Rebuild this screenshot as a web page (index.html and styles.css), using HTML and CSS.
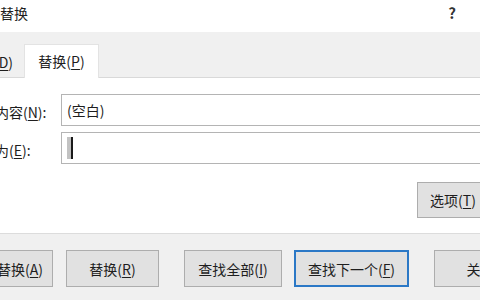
FILE: index.html
```html
<!DOCTYPE html>
<html lang="zh-CN">
<head>
  <meta charset="UTF-8">
  <title>查找和替换</title>
  <link rel="stylesheet" href="styles.css">
</head>
<body>
  <div class="dialog">
    <div class="titlebar">
      <span class="title">查找和替换</span>
      <span class="help">?</span>
    </div>

    <div class="tabs">
      <div class="tab">查找(<u>D</u>)</div>
      <div class="tab active">替换(<u>P</u>)</div>
    </div>

    <div class="content">
      <div class="row">
        <label class="label">查找内容(<u>N</u>):</label>
        <div class="input">(空白)</div>
      </div>
      <div class="row">
        <label class="label">替换为(<u>E</u>):</label>
        <div class="input"><span class="caret"></span></div>
      </div>
      <div class="options">
        <button class="btn btn-options">选项(<u>T</u>)</button>
      </div>
    </div>

    <div class="footer">
      <button class="btn b-all">全部替换(<u>A</u>)</button>
      <button class="btn b-one">替换(<u>R</u>)</button>
      <button class="btn b-findall">查找全部(<u>I</u>)</button>
      <button class="btn b-next">查找下一个(<u>F</u>)</button>
      <button class="btn b-close">关闭</button>
    </div>
  </div>
</body>
</html>
```

FILE: styles.css
```css
html, body {
  margin: 0;
  padding: 0;
  width: 480px;
  height: 300px;
  overflow: hidden;
  background: #ffffff;
}

body {
  font-family: "Noto Sans CJK SC", "Noto Sans", sans-serif;
  font-size: 14px;
  color: #1e1e1e;
}

u {
  text-decoration: underline;
  text-underline-offset: 2px;
}

/* the dialog is wider than the window, its left side is cut off */
.dialog {
  width: 600px;
  margin-left: -48px;
}

.titlebar {
  height: 32px;
  box-sizing: border-box;
  padding: 3px 96px 0 6px;
  display: flex;
  justify-content: space-between;
  align-items: flex-start;
  background: #ffffff;
  line-height: 20px;
}

.help {
  font-size: 15px;
  font-weight: bold;
  color: #333;
}

.tabs {
  height: 46px;
  box-sizing: border-box;
  padding-left: 3px;
  display: flex;
  align-items: flex-end;
  background: #f0f0f0;
  border-bottom: 1px solid #d9d9d9;
}

.tab {
  width: 69px;
  height: 32px;
  display: flex;
  align-items: center;
  justify-content: center;
  margin-bottom: -1px;
}

.tab.active {
  width: 75px;
  height: 34px;
  box-sizing: border-box;
  background: #ffffff;
  border: 1px solid #e3e3e3;
  border-bottom: none;
  padding-bottom: 2px;
}

.content {
  padding: 16px 63px 15px 15px;
  background: #ffffff;
}

.row {
  display: flex;
  align-items: center;
  margin-bottom: 6px;
}

.label {
  width: 94px;
  flex-shrink: 0;
  padding-top: 3px;
}

.input {
  flex: 1;
  height: 32px;
  box-sizing: border-box;
  border: 1px solid #b4b4b4;
  padding-left: 5px;
  display: flex;
  align-items: center;
}

.caret {
  width: 4px;
  height: 22px;
  background: #c2c2c2;
  border-right: 2px solid #1a1a1a;
}

.options {
  display: flex;
  justify-content: flex-end;
  margin-top: 18px;
}

.btn {
  font: inherit;
  color: #1e1e1e;
  height: 37px;
  box-sizing: border-box;
  background: #e1e1e1;
  border: 1px solid #adadad;
  padding: 0;
  flex-shrink: 0;
}

.btn-options {
  width: 72px;
  height: 36px;
}

.footer {
  height: 67px;
  box-sizing: border-box;
  padding: 16px 0 0 7px;
  display: flex;
  align-items: flex-start;
  background: #f0f0f0;
  border-top: 1px solid #dcdcdc;
}

.b-all { width: 94px; }
.b-one { width: 93px; margin-left: 13px; }
.b-findall { width: 98px; margin-left: 25px; }
.b-next {
  width: 115px;
  margin-left: 12px;
  border: 2px solid #2b78c6;
}
.b-close { width: 93px; margin-left: 25px; }
```
